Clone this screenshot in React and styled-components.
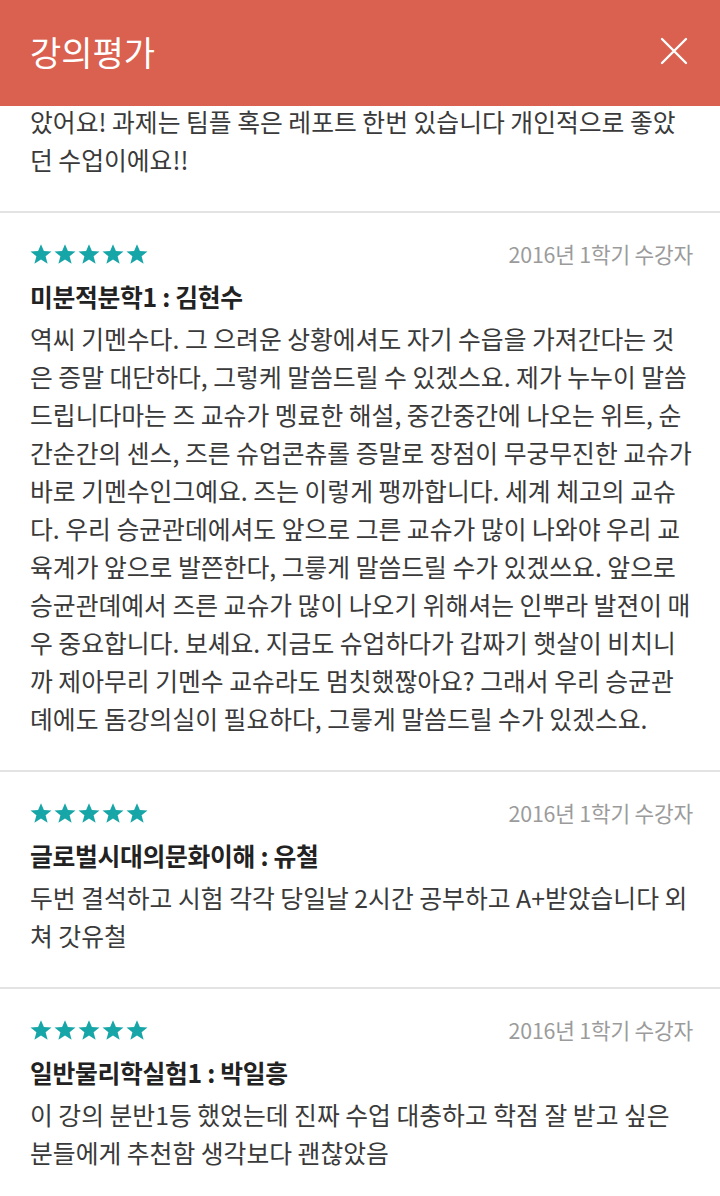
import React from "react";
import styled, { createGlobalStyle } from "styled-components";

const GlobalStyle = createGlobalStyle`
  html, body {
    margin: 0;
    padding: 0;
    background: #ffffff;
    overflow: hidden;
  }
  body {
    font-family: "Noto Sans CJK KR", "Noto Sans", sans-serif;
    -webkit-font-smoothing: antialiased;
  }
`;

const Screen = styled.div`
  width: 720px;
  min-height: 1196px;
  background: #ffffff;
  display: flex;
  flex-direction: column;
`;

const AppBar = styled.header`
  position: sticky;
  top: 0;
  z-index: 2;
  height: 106px;
  flex: 0 0 106px;
  background: #da604f;
  display: flex;
  align-items: center;
  justify-content: space-between;
  padding: 0 32px 0 30px;
  box-sizing: border-box;
`;

const AppTitle = styled.h1`
  margin: 0;
  font-family: "Noto Sans CJK KR", sans-serif;
  font-size: 34px;
  font-weight: 400;
  color: #ffffff;
  line-height: 1;
  margin-top: -3px;
`;

const CloseButton = styled.button`
  width: 28px;
  height: 28px;
  padding: 0;
  border: none;
  background: transparent;
  display: flex;
  align-items: center;
  justify-content: center;
  margin-top: -4px;
`;

const List = styled.div`
  display: flex;
  flex-direction: column;
  margin-top: ${(p) => p.$scroll}px;
`;

const Review = styled.article`
  padding: ${(p) => (p.$partial ? "0" : "22px")} 10px 33px 30px;
  border-bottom: 2px solid #e3e3e3;
  display: flex;
  flex-direction: column;
`;

const MetaRow = styled.div`
  height: 38px;
  display: flex;
  align-items: center;
  justify-content: space-between;
  padding-right: 17px;
`;

const Stars = styled.div`
  display: flex;
  margin-left: -1.5px;
`;

const Semester = styled.span`
  font-size: 21.4px;
  color: #9b9b9b;
  letter-spacing: -0.2px;
  line-height: 38px;
`;

const CourseTitle = styled.h2`
  margin: 4px 0 0;
  font-size: 24.8px;
  font-weight: 700;
  color: #222222;
  line-height: 38px;
  letter-spacing: -0.3px;
`;

const Body = styled.p`
  margin: ${(p) => (p.$partial ? "0" : "4px")} 0 0;
  font-size: 24.8px;
  font-weight: 400;
  color: #3a3a3a;
  line-height: 38px;
  white-space: nowrap;
`;

const Star = () => (
  <svg width="24" height="24" viewBox="0 0 24 24">
    <polygon
      points="12,2.2 14.9,9 22.5,9.4 16.6,14.3 18.6,21.8 12,17.6 5.4,21.8 7.4,14.3 1.5,9.4 9.1,9"
      fill="#17a6a7"
    />
  </svg>
);

const CloseIcon = () => (
  <svg width="28" height="28" viewBox="0 0 28 28">
    <path d="M2 2 L26 26 M26 2 L2 26" stroke="#ffffff" strokeWidth="2.4" strokeLinecap="round" />
  </svg>
);

const reviews = [
  {
    partial: true,
    lines: [
      "았어요! 과제는 팀플 혹은 레포트 한번 있습니다 개인적으로 좋았",
      "던 수업이에요!!",
    ],
  },
  {
    title: "미분적분학1 : 김현수",
    semester: "2016년 1학기 수강자",
    lines: [
      "역씨 기멘수다. 그 으려운 상황에셔도 자기 수읍을 가져간다는 것",
      "은 증말 대단하다, 그렇케 말씀드릴 수 있겠스요. 제가 누누이 말씀",
      "드립니다마는 즈 교슈가 멩료한 해설, 중간중간에 나오는 위트, 순",
      "간순간의 센스, 즈른 슈업콘츄롤 증말로 장점이 무궁무진한 교슈가",
      "바로 기멘수인그예요. 즈는 이렇게 팽까합니다. 세계 체고의 교슈",
      "다. 우리 승균관데에셔도 앞으로 그른 교슈가 많이 나와야 우리 교",
      "육계가 앞으로 발쯘한다, 그릏게 말씀드릴 수가 있겠쓰요. 앞으로",
      "승균관뎨예서 즈른 교슈가 많이 나오기 위해셔는 인뿌라 발젼이 매",
      "우 중요합니다. 보셰요. 지금도 슈업하다가 갑짜기 햇살이 비치니",
      "까 제아무리 기멘수 교슈라도 멈칫했짢아요? 그래서 우리 승균관",
      "뎨에도 돔강의실이 필요하다, 그릏게 말씀드릴 수가 있겠스요.",
    ],
  },
  {
    title: "글로벌시대의문화이해 : 유철",
    semester: "2016년 1학기 수강자",
    lines: [
      "두번 결석하고 시험 각각 당일날 2시간 공부하고 A+받았습니다 외",
      "쳐 갓유철",
    ],
  },
  {
    title: "일반물리학실험1 : 박일흥",
    semester: "2016년 1학기 수강자",
    lines: [
      "이 강의 분반1등 했었는데 진짜 수업 대충하고 학점 잘 받고 싶은",
      "분들에게 추천함 생각보다 괜찮았음",
    ],
  },
];

export default function App() {
  return (
    <>
      <GlobalStyle />
      <Screen>
        <AppBar>
          <AppTitle>강의평가</AppTitle>
          <CloseButton aria-label="닫기">
            <CloseIcon />
          </CloseButton>
        </AppBar>
        <List $scroll={-4}>
          {reviews.map((r, i) => (
            <Review key={i} $partial={r.partial}>
              {!r.partial && (
                <>
                  <MetaRow>
                    <Stars>
                      {[0, 1, 2, 3, 4].map((s) => (
                        <Star key={s} />
                      ))}
                    </Stars>
                    <Semester>{r.semester}</Semester>
                  </MetaRow>
                  <CourseTitle>{r.title}</CourseTitle>
                </>
              )}
              <Body $partial={r.partial}>
                {r.lines.map((l, j) => (
                  <React.Fragment key={j}>
                    {l}
                    {j < r.lines.length - 1 && <br />}
                  </React.Fragment>
                ))}
              </Body>
            </Review>
          ))}
        </List>
      </Screen>
    </>
  );
}
